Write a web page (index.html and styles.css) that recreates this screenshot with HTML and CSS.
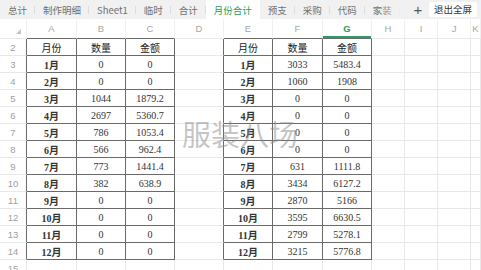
FILE: index.html
```html
<!DOCTYPE html>
<html lang="zh">
<head>
<meta charset="utf-8">
<link rel="stylesheet" href="styles.css">
</head>
<body>
<div class="app">
  <div class="tabbar">
    <div class="tabs">
      <span class="tab">总计</span>
      <span class="tab">制作明细</span>
      <span class="tab">Sheet1</span>
      <span class="tab">临时</span>
      <span class="tab">合计</span>
      <span class="tab active">月份合计</span>
      <span class="tab">预支</span>
      <span class="tab">采购</span>
      <span class="tab">代码</span>
      <span class="tab">家装</span>
      <div class="fade"></div>
    </div>
    <span class="plus">+</span>
    <span class="exit">退出全屏</span>
  </div>
  <div class="sheet">
    <div class="row head">
      <div class="c rn corner"><svg width="5" height="5" viewBox="0 0 5 5"><path d="M5 0V5H0Z" fill="#c4c4c4"/></svg></div>
      <div class="c tt">A</div><div class="c tt">B</div><div class="c tt">C</div><div class="c">D</div>
      <div class="c tt">E</div><div class="c tt">F</div><div class="c tt sel">G</div>
      <div class="c">H</div><div class="c">I</div><div class="c">J</div><div class="c">K</div>
    </div>
    <div class="row"><div class="c rn tl">2</div><div class="c t th">月份</div><div class="c t th">数量</div><div class="c t th">金额</div><div class="c tl"></div><div class="c t th">月份</div><div class="c t th">数量</div><div class="c t th">金额</div><div class="c"></div><div class="c"></div><div class="c"></div><div class="c"></div></div>
    <div class="row"><div class="c rn tl">3</div><div class="c t m">1月</div><div class="c t">0</div><div class="c t">0</div><div class="c tl"></div><div class="c t m">1月</div><div class="c t">3033</div><div class="c t">5483.4</div><div class="c"></div><div class="c"></div><div class="c"></div><div class="c"></div></div>
    <div class="row"><div class="c rn tl">4</div><div class="c t m">2月</div><div class="c t">0</div><div class="c t">0</div><div class="c tl"></div><div class="c t m">2月</div><div class="c t">1060</div><div class="c t">1908</div><div class="c"></div><div class="c"></div><div class="c"></div><div class="c"></div></div>
    <div class="row"><div class="c rn tl">5</div><div class="c t m">3月</div><div class="c t">1044</div><div class="c t">1879.2</div><div class="c tl"></div><div class="c t m">3月</div><div class="c t">0</div><div class="c t">0</div><div class="c"></div><div class="c"></div><div class="c"></div><div class="c"></div></div>
    <div class="row"><div class="c rn tl">6</div><div class="c t m">4月</div><div class="c t">2697</div><div class="c t">5360.7</div><div class="c tl"></div><div class="c t m">4月</div><div class="c t">0</div><div class="c t">0</div><div class="c"></div><div class="c"></div><div class="c"></div><div class="c"></div></div>
    <div class="row"><div class="c rn tl">7</div><div class="c t m">5月</div><div class="c t">786</div><div class="c t">1053.4</div><div class="c tl"></div><div class="c t m">5月</div><div class="c t">0</div><div class="c t">0</div><div class="c"></div><div class="c"></div><div class="c"></div><div class="c"></div></div>
    <div class="row"><div class="c rn tl">8</div><div class="c t m">6月</div><div class="c t">566</div><div class="c t">962.4</div><div class="c tl"></div><div class="c t m">6月</div><div class="c t">0</div><div class="c t">0</div><div class="c"></div><div class="c"></div><div class="c"></div><div class="c"></div></div>
    <div class="row"><div class="c rn tl">9</div><div class="c t m">7月</div><div class="c t">773</div><div class="c t">1441.4</div><div class="c tl"></div><div class="c t m">7月</div><div class="c t">631</div><div class="c t">1111.8</div><div class="c"></div><div class="c"></div><div class="c"></div><div class="c"></div></div>
    <div class="row"><div class="c rn tl">10</div><div class="c t m">8月</div><div class="c t">382</div><div class="c t">638.9</div><div class="c tl"></div><div class="c t m">8月</div><div class="c t">3434</div><div class="c t">6127.2</div><div class="c"></div><div class="c"></div><div class="c"></div><div class="c"></div></div>
    <div class="row"><div class="c rn tl">11</div><div class="c t m">9月</div><div class="c t">0</div><div class="c t">0</div><div class="c tl"></div><div class="c t m">9月</div><div class="c t">2870</div><div class="c t">5166</div><div class="c"></div><div class="c"></div><div class="c"></div><div class="c"></div></div>
    <div class="row"><div class="c rn tl">12</div><div class="c t m">10月</div><div class="c t">0</div><div class="c t">0</div><div class="c tl"></div><div class="c t m">10月</div><div class="c t">3595</div><div class="c t">6630.5</div><div class="c"></div><div class="c"></div><div class="c"></div><div class="c"></div></div>
    <div class="row"><div class="c rn tl">13</div><div class="c t m">11月</div><div class="c t">0</div><div class="c t">0</div><div class="c tl"></div><div class="c t m">11月</div><div class="c t">2799</div><div class="c t">5278.1</div><div class="c"></div><div class="c"></div><div class="c"></div><div class="c"></div></div>
    <div class="row"><div class="c rn tl">14</div><div class="c t m">12月</div><div class="c t">0</div><div class="c t">0</div><div class="c tl"></div><div class="c t m">12月</div><div class="c t">3215</div><div class="c t">5776.8</div><div class="c"></div><div class="c"></div><div class="c"></div><div class="c"></div></div>
    <div class="row"><div class="c rn">15</div><div class="c"></div><div class="c"></div><div class="c"></div><div class="c"></div><div class="c"></div><div class="c"></div><div class="c"></div><div class="c"></div><div class="c"></div><div class="c"></div><div class="c"></div></div>
    <div class="watermark">服装八场</div>
  </div>
</div>
</body>
</html>
```
FILE: styles.css
```css
* { box-sizing: border-box; }
html, body { margin: 0; padding: 0; background: #fff; }
body { width: 481px; height: 270px; overflow: hidden; font-family: "Noto Sans CJK SC", "Liberation Sans", sans-serif; }
.app { width: 481px; height: 270px; overflow: hidden; display: flex; flex-direction: column; }

.tabbar { height: 19px; flex: 0 0 19px; background: #f1f1f1; display: flex; align-items: center; }
.tabs { display: flex; width: 410px; height: 19px; overflow: hidden; position: relative; }
.tab { flex: 0 0 auto; padding: 0 8px; font-size: 9.5px; line-height: 20px; color: #707070; position: relative; white-space: nowrap; }
.tab::after { content: ""; position: absolute; right: 0; top: 6px; height: 8px; border-right: 1px solid #dcdcdc; }
.tab.active { background: #fff; color: #1f9d55; }
.tab.active::after { display: none; }
.fade { position: absolute; right: 0; top: 0; width: 30px; height: 19px; background: linear-gradient(to right, rgba(241,241,241,0), #f1f1f1 90%); }
.plus { width: 16px; text-align: center; font-size: 15px; line-height: 19px; color: #555; font-family: "Liberation Sans", sans-serif; font-weight: 300; }
.exit { margin-left: 3px; height: 15px; padding: 0 5px; background: #fff; border-radius: 2px; font-size: 9.5px; line-height: 15px; color: #333; }

.sheet { position: relative; flex: 1; }
.row { display: grid; grid-template-columns: 27px 50px 49px 49px 49px 49px 50px 49px 33px 33px 33px 1fr; height: 17px; }
.row.head { height: 20px; }
.c { border-right: 1px solid #e8e8e8; border-bottom: 1px solid #e8e8e8; display: flex; align-items: center; justify-content: center; font-family: "Liberation Serif", "Noto Sans CJK SC", serif; font-size: 10px; color: #333; white-space: nowrap; }
.head .c { font-family: "Liberation Sans", sans-serif; font-size: 9.5px; color: #a6a6a6; border-right-color: #f0f0f0; }
.head .tt { border-bottom-color: #6a6a6a; }
.head .sel { color: #1f9d55; font-weight: bold; box-shadow: inset 0 -2px 0 #2a9d63; }
.corner { justify-content: flex-end; align-items: flex-end; padding: 0 5px 4px 0; }
.rn { font-family: "Liberation Sans", sans-serif; font-size: 9.5px; color: #a0a0a0; }
.t { border-right-color: #6a6a6a; border-bottom-color: #6a6a6a; }
.tl { border-right-color: #6a6a6a; }
.th { font-family: "Noto Sans CJK SC", sans-serif; font-size: 10px; color: #222; }
.m { font-weight: bold; color: #333; }

.watermark { position: absolute; left: 182px; top: 98px; font-size: 29px; line-height: 32px; color: rgba(140,140,140,0.5); font-family: "Noto Sans CJK SC", sans-serif; pointer-events: none; }
```
